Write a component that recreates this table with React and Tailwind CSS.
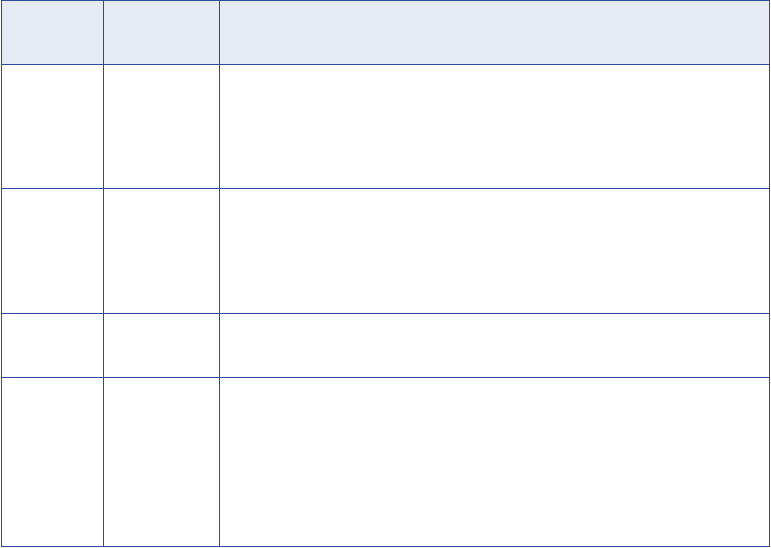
import React from "react";

const rows = [
    { h: "h-[124px]" },
    { h: "h-[125px]" },
    { h: "h-[64px]" },
    { h: "h-[169px]" },
];

export default function App() {
    return (
        <div className="w-[771px] h-[548px] bg-white">
            {/* Table */}
            <div className="ml-px w-[769px] border-l border-t border-[#2b4c9a] grid grid-cols-[102px_116px_550px]">
                {/* Header */}
                <div className="h-[64px] bg-[#e5eaf4] border-r border-b border-[#2b4c9a]"></div>
                <div className="h-[64px] bg-[#e5eaf4] border-r border-b border-[#2b4c9a]"></div>
                <div className="h-[64px] bg-[#e5eaf4] border-r border-b border-[#2b4c9a]"></div>

                {/* Body rows */}
                {rows.map((row, i) => (
                    <React.Fragment key={i}>
                        <div className={`${row.h} border-r border-b border-[#2b4c9a]`}></div>
                        <div className={`${row.h} border-r border-b border-[#2b4c9a]`}></div>
                        <div className={`${row.h} border-r border-b border-[#2b4c9a]`}></div>
                    </React.Fragment>
                ))}
            </div>
        </div>
    );
}
